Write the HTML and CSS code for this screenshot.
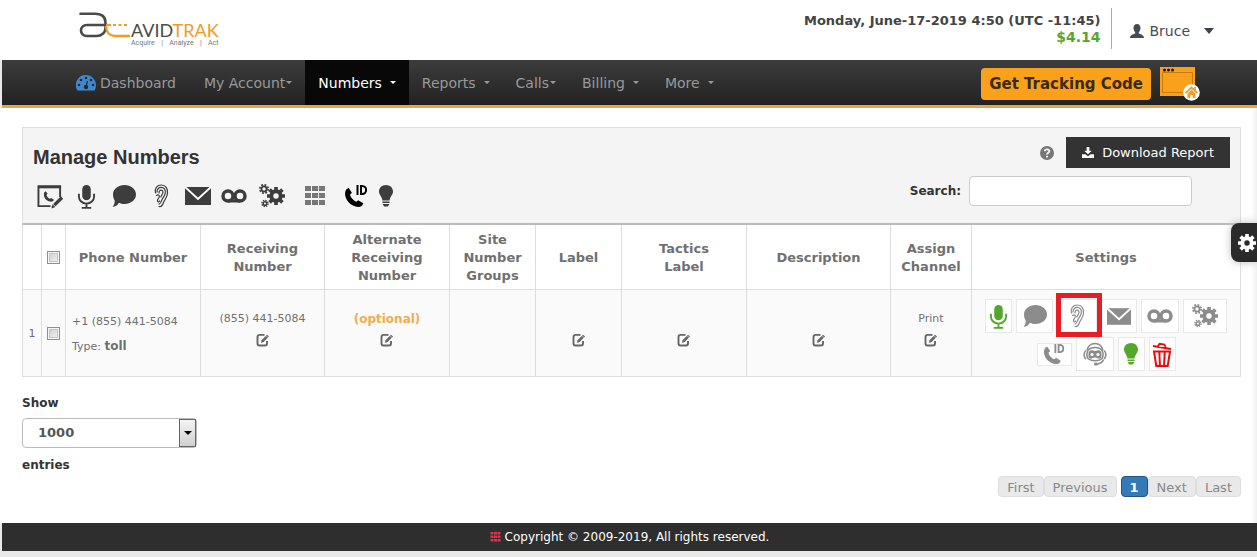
FILE: index.html
```html
<!DOCTYPE html>
<html lang="en">
<head>
<meta charset="utf-8">
<title>AvidTrak - Manage Numbers</title>
<link rel="stylesheet" href="styles.css">
</head>
<body>
<svg class="sprite" aria-hidden="true">
  <symbol id="i-mic" viewBox="0 0 20 26"><rect x="5.500" y="1" width="9" height="16" rx="4.500" fill="currentColor"/><path d="M2 10v3a8 7.500 0 0 0 16 0v-3M10 20.500V25M5 25h10" fill="none" stroke="currentColor" stroke-width="2"/></symbol>
  <symbol id="i-chat" viewBox="0 0 24 22"><path d="M12.500 0C19 0 24 4.300 24 9.500S19 19 12.500 19c-2 0-4-.4-5.600-1.200C5.500 20.500 3.500 21.500.5 21.800c1.600-1.600 2.300-3.300 2.200-6.200C1.600 13.800 1 11.700 1 9.500 1 4.300 6 0 12.500 0z" fill="currentColor"/></symbol>
  <symbol id="i-ear" viewBox="0 0 16 24"><path d="M2.500 9C1.500 4 4 1 8.500 1s6.500 4 6 8.500c-.4 4-2.500 5.500-4 9C9.500 21.500 8 23 6 22.500M4 8c0-3 2-4.800 4.500-4.600 3.200.3 4.300 3 3.700 6-.6 3-2.700 4.300-3.700 7.300-.6 2-1.500 3.300-2.500 3.500M6 9c0-2 .9-3 2.200-2.900 1.800.2 2.200 2 1.300 3.700C8.500 11.500 8.200 12 7.800 13M3.500 11.500c1.600-1.200 3-.4 2.800 1.200S4.500 14.700 4.500 16.500s1.300 1.800 2.100.5" fill="none" stroke="currentColor" stroke-width="1.200" stroke-linecap="round"/></symbol>
  <symbol id="i-mail" viewBox="0 0 26 18"><path d="M0 0h26v18H0z" fill="currentColor"/><path d="M0 0l13 12L26 0" fill="none" stroke="#fff" stroke-width="2"/></symbol>
  <symbol id="i-voicemail" viewBox="0 0 26 14"><path d="M7 12h12" stroke="currentColor" stroke-width="3"/><circle cx="7" cy="7" r="5" fill="none" stroke="currentColor" stroke-width="3.500"/><circle cx="19" cy="7" r="5" fill="none" stroke="currentColor" stroke-width="3.500"/></symbol>
  <symbol id="i-gear" viewBox="0 0 20 20"><circle cx="10" cy="10" r="5.200" fill="none" stroke="currentColor" stroke-width="4.400"/><path d="M10 0v4M10 16v4M0 10h4M16 10h4M2.900 2.900l3 3M14.100 14.100l3 3M2.900 17.100l3-3M14.100 5.900l3-3" stroke="currentColor" stroke-width="4"/></symbol>
  <symbol id="i-gears" viewBox="0 0 26 24"><use href="#i-gear" x="8" y="3" width="18" height="18"/><g fill="none" stroke="currentColor"><circle cx="5" cy="5" r="2.600" stroke-width="1.800"/><circle cx="5" cy="5" r="4.200" stroke-width="1.700" stroke-dasharray="1.800 1.500"/><circle cx="6" cy="19.500" r="1.800" stroke-width="1.500"/><circle cx="6" cy="19.500" r="3.100" stroke-width="1.300" stroke-dasharray="1.400 1.030"/></g></symbol>
  <symbol id="i-grid" viewBox="0 0 20 20"><path d="M0 0h6v5H0zM7 0h6v5H7zM14 0h6v5h-6zM0 7h6v5H0zM7 7h6v5H7zM14 7h6v5h-6zM0 14h6v5H0zM7 14h6v5H7zM14 14h6v5h-6z" fill="currentColor"/></symbol>
  <symbol id="i-phone" viewBox="0 0 18 18"><path d="M3.500 0L6.500 4.500 4.700 6.500c.9 2.800 3 5.200 6 6.500L12.500 11.500l4.800 3c-.6 2.200-2 3.500-4.800 3.500C5.500 17.500 0 11.500 0 5 .2 2.500 1.300.5 3.500 0z" fill="currentColor"/></symbol>
  <symbol id="i-callid" viewBox="0 0 24 24"><use href="#i-phone" x="1" y="4" width="19" height="19"/><path d="M13.500 1v10M17 2h1c5.500 0 5.500 8 0 8h-1z" fill="none" stroke="currentColor" stroke-width="2"/></symbol>
  <symbol id="i-bulb" viewBox="0 0 14 22"><path d="M7 0c4 0 7 2.800 7 6.500 0 3.500-3 5-3.400 9H3.400C3 11.500 0 10 0 6.500 0 2.800 3 0 7 0zM3.500 16.500h7v1.500h-7zM3.500 19h7l-1.700 2.500H5.200z" fill="currentColor"/></symbol>
  <symbol id="i-form" viewBox="0 0 27 25"><path d="M24 13V2H1.500v20.500H14" fill="none" stroke="currentColor" stroke-width="2"/><path d="M1 1h24v3H1z" fill="currentColor"/><use href="#i-phone" x="7" y="7" width="11" height="11"/><path d="M18 21.500l8-8" stroke="currentColor" stroke-width="3.500"/><path d="M16 20.500l3 3L15 25z" fill="currentColor"/></symbol>
  <symbol id="i-bot" viewBox="0 0 24 24"><path d="M4 8.500C5 4 8 1.500 12 1.500S19 4 20 8.500M3 8.500c-2.500 2-2.500 6.500 0 8.500M21 8.500c2.500 2 2.500 6.500 0 8.500M20.500 17.500c-1 3-3.500 4.300-6.500 4.500" fill="none" stroke="currentColor" stroke-width="1.600"/><path d="M5 8.500c3-4 11-4 14 0 1.500 3 1.500 5.500 0 8-3 3-11 3-14 0-1.500-2.500-1.500-5 0-8z" fill="none" stroke="currentColor" stroke-width="1.500"/><path d="M6.500 9c1.500-1.500 3.500 0 5.500 0s4-1.500 5.500 0 1.500 6 0 7.300S14 15.500 12 15.500s-4 2-5.500.8-1.500-5.800 0-7.300z" fill="currentColor"/><circle cx="9" cy="12.500" r="1.600" fill="#fff"/><circle cx="15" cy="12.500" r="1.600" fill="#fff"/><rect x="11" y="20.500" width="4" height="3" rx="1.500" fill="currentColor"/></symbol>
  <symbol id="i-trash" viewBox="0 0 20 25"><path d="M1 4l18 3M6 4.500L7.500 1.800 12.500 2.500 13.500 5.500" fill="none" stroke="currentColor" stroke-width="1.800"/><path d="M2 9.500h16l-2.300 14.500H4.300zM7.300 10l.6 13M12.700 10l-.6 13" fill="none" stroke="currentColor" stroke-width="2"/></symbol>
  <symbol id="i-edit" viewBox="0 0 14 14"><path d="M8.500 1.900H3.500A2 2 0 0 0 1.500 4v6.500a2 2 0 0 0 2 2H9a2 2 0 0 0 2-2V8" fill="none" stroke="currentColor" stroke-width="1.900"/><path d="M5 10l.5-2.800L11 1.700 13 3.500 7.600 9z" fill="currentColor"/><path d="M10 2.600L12 4.600" stroke="#fafafa" stroke-width=".7"/></symbol>
  <symbol id="i-user" viewBox="0 0 14 14"><path d="M7 0c2.300 0 3.600 1.700 3.500 4-.1 2-.8 3.400-1.700 4.300v1.300c2.500.9 5 1.500 5.200 4.400H0c.2-2.900 2.700-3.500 5.200-4.400V8.300C4.300 7.400 3.600 6 3.500 4 3.400 1.700 4.700 0 7 0z" fill="currentColor"/></symbol>
  <symbol id="i-download" viewBox="0 0 13 12"><path d="M5 0h3v4h2.500L6.500 8 2.500 4H5zM0 8h3.500l3 2 3-2H13v4H0z" fill="currentColor"/></symbol>
  <symbol id="i-help" viewBox="0 0 14 14"><circle cx="7" cy="7" r="7" fill="currentColor"/><path d="M4.700 5.300C4.700 2.700 9.300 2.700 9.300 5.300 9.300 6.800 7 6.800 7 8.600M7 9.700v1.900" fill="none" stroke="#f3f3f3" stroke-width="1.900"/></symbol>
  <symbol id="i-gauge" viewBox="0 0 20 16"><path d="M10 0c5.500 0 10 4.500 10 10 0 2-.6 4-1.500 5.500h-17A10 10 0 0 1 10 0z" fill="currentColor"/><g fill="#2b2b2b"><circle cx="10" cy="3" r="1.300"/><circle cx="5" cy="5" r="1.300"/><circle cx="15" cy="5" r="1.300"/><circle cx="3" cy="10" r="1.300"/><circle cx="17" cy="10" r="1.300"/><circle cx="10" cy="12" r="2.200"/></g><path d="M10 12l1.500-6" stroke="#2b2b2b" stroke-width="1.300"/></symbol>
</svg>

<header class="topbar">
  <a class="logo" href="#" aria-label="AvidTrak">
    <svg class="logo-mark" width="52" height="28" viewBox="0 0 52 28" aria-hidden="true"><path d="M1.500 1.800H16c7 0 10.500 3.500 10.500 9v5c0 5-4 8.200-9 8.200H8c-8 0-8-11 0-11h18" fill="none" stroke="#4a4a4a" stroke-width="2.600" stroke-linecap="round"/><path d="M27 13h5" stroke="#f39a27" stroke-width="2.200"/><path d="M34 13h14" stroke="#f39a27" stroke-width="2.200" stroke-dasharray="3 2.500"/><path d="M27 14c.5 7 3 10 9 10h15" fill="none" stroke="#f39a27" stroke-width="2.400"/></svg>
    <span class="logo-words">
      <span class="logo-name">AVID<b class="logo-accent">TRAK</b></span>
      <span class="logo-tag"><span>Acquire</span><span>|</span><span>Analyze</span><span>|</span><span>Act</span></span>
    </span>
  </a>
  <div class="account">
    <div class="clock">
      <div>Monday, June-17-2019 4:50 (UTC -11:45)</div>
      <div class="balance">$4.14</div>
    </div>
    <button class="user" type="button"><svg width="14" height="14"><use href="#i-user"/></svg>Bruce<span class="user-caret"></span></button>
  </div>
</header>

<nav class="nav">
  <div class="nav-links">
    <a class="home" href="#"><svg class="gauge" width="20" height="16"><use href="#i-gauge"/></svg>Dashboard</a>
    <a href="#">My Account<span class="caret"></span></a>
    <a class="active" href="#">Numbers <span class="caret spaced"></span></a>
    <a href="#">Reports <span class="caret spaced"></span></a>
    <a href="#">Calls<span class="caret"></span></a>
    <a href="#">Billing <span class="caret spaced"></span></a>
    <a href="#">More <span class="caret spaced"></span></a>
  </div>
  <div class="nav-actions">
    <button class="tracking" type="button">Get Tracking Code</button>
    <a href="#" aria-label="Home page"><svg class="site" width="40" height="34" viewBox="0 0 40 34"><path d="M0 0h35v29H0z" fill="#f9a11b"/><path d="M2.500 5.500h30v20h-30z" fill="none" stroke="#c67c10"/><g fill="#111"><circle cx="4.500" cy="3" r="1.500"/><circle cx="8.500" cy="3" r="1.500"/><circle cx="12.500" cy="3" r="1.500"/></g><circle cx="31.500" cy="25.500" r="8.300" fill="#fff"/><path d="M25.500 26l6-5.500 6 5.500M35 20v3" fill="none" stroke="#f39a27" stroke-width="1.700"/><path d="M27.500 26.500l4-3.700 4 3.700v4.500h-2.700v-3h-2.600v3h-2.700z" fill="#f39a27"/></svg></a>
  </div>
</nav>

<main class="content">
  <section class="panel">
    <div class="panel-left">
      <h1>Manage Numbers</h1>
      <div class="toolbar">
        <button type="button" class="w27" aria-label="Edit number"><svg width="26" height="25"><use href="#i-form"/></svg></button>
        <button type="button" class="w26" aria-label="Record"><svg width="19" height="25"><use href="#i-mic"/></svg></button>
        <button type="button" class="w29" aria-label="Message"><svg width="24" height="22"><use href="#i-chat"/></svg></button>
        <button type="button" class="w26" aria-label="Whisper"><svg width="16" height="24"><use href="#i-ear"/></svg></button>
        <button type="button" class="w28" aria-label="Email"><svg width="26" height="18"><use href="#i-mail"/></svg></button>
        <button type="button" class="w24" aria-label="Voicemail"><svg width="26" height="14"><use href="#i-voicemail"/></svg></button>
        <button type="button" class="w31" aria-label="Configure"><svg width="26" height="24"><use href="#i-gears"/></svg></button>
        <button type="button" class="w36 muted" aria-label="Keypad"><svg width="20" height="20"><use href="#i-grid"/></svg></button>
        <button type="button" class="w26 black" aria-label="Caller ID"><svg width="24" height="24"><use href="#i-callid"/></svg></button>
        <button type="button" class="w14" aria-label="Tips"><svg width="14" height="22"><use href="#i-bulb"/></svg></button>
      </div>
    </div>
    <div class="panel-right">
      <div class="report">
        <svg class="help" width="14" height="14"><use href="#i-help"/></svg>
        <button class="download" type="button"><svg width="12" height="11"><use href="#i-download"/></svg>Download Report</button>
      </div>
      <div class="search">
        <label for="search">Search:</label>
        <input id="search" type="text">
      </div>
    </div>
  </section>

  <table class="numbers">
    <colgroup><col class="c-index"><col class="c-check"><col class="c-phone"><col class="c-recv"><col class="c-alt"><col class="c-site"><col class="c-site"><col class="c-tactics"><col class="c-desc"><col class="c-channel"><col class="c-settings"></colgroup>
    <thead>
      <tr>
        <th></th>
        <th><input type="checkbox" aria-label="Select all"></th>
        <th>Phone Number</th>
        <th>Receiving Number</th>
        <th>Alternate Receiving Number</th>
        <th>Site Number Groups</th>
        <th>Label</th>
        <th>Tactics<br>Label</th>
        <th>Description</th>
        <th>Assign Channel</th>
        <th>Settings</th>
      </tr>
    </thead>
    <tbody>
      <tr>
        <td>1</td>
        <td><input type="checkbox" aria-label="Select number"></td>
        <td class="phone"><div>+1 (855) 441-5084</div><div>Type: <b>toll</b></div></td>
        <td><div class="value">(855) 441-5084</div><button type="button" class="edit" aria-label="Edit"><svg width="14" height="14"><use href="#i-edit"/></svg></button></td>
        <td><div class="value optional">(optional)</div><button type="button" class="edit" aria-label="Edit"><svg width="14" height="14"><use href="#i-edit"/></svg></button></td>
        <td></td>
        <td><div class="value"></div><button type="button" class="edit" aria-label="Edit"><svg width="14" height="14"><use href="#i-edit"/></svg></button></td>
        <td><div class="value"></div><button type="button" class="edit" aria-label="Edit"><svg width="14" height="14"><use href="#i-edit"/></svg></button></td>
        <td><div class="value"></div><button type="button" class="edit" aria-label="Edit"><svg width="14" height="14"><use href="#i-edit"/></svg></button></td>
        <td><div class="value">Print</div><button type="button" class="edit" aria-label="Edit"><svg width="14" height="14"><use href="#i-edit"/></svg></button></td>
        <td class="settings">
          <div class="tiles">
            <button type="button" class="w27 green" aria-label="Record"><svg width="19" height="25"><use href="#i-mic"/></svg></button>
            <button type="button" class="w37" aria-label="Message"><svg width="24" height="22"><use href="#i-chat"/></svg></button>
            <button type="button" class="w40 marked" aria-label="Whisper"><svg width="16" height="24"><use href="#i-ear"/></svg></button>
            <button type="button" class="w36" aria-label="Email"><svg width="24" height="17"><use href="#i-mail"/></svg></button>
            <button type="button" class="w38" aria-label="Voicemail"><svg width="26" height="14"><use href="#i-voicemail"/></svg></button>
            <button type="button" class="w44" aria-label="Configure"><svg width="26" height="24"><use href="#i-gears"/></svg></button>
          </div>
          <div class="tiles">
            <button type="button" class="w35 short" aria-label="Caller ID"><svg width="22" height="22"><use href="#i-callid"/></svg></button>
            <button type="button" class="w38" aria-label="Assistant"><svg width="24" height="24"><use href="#i-bot"/></svg></button>
            <button type="button" class="w27 green" aria-label="Tips"><svg width="14" height="22"><use href="#i-bulb"/></svg></button>
            <button type="button" class="w27 red" aria-label="Delete"><svg width="20" height="25"><use href="#i-trash"/></svg></button>
          </div>
        </td>
      </tr>
    </tbody>
  </table>

  <div class="length">
    <label for="length">Show</label>
    <div class="select">
      <select id="length"><option>1000</option></select>
      <span class="select-arrow"></span>
    </div>
    <div>entries</div>
  </div>

  <div class="pager">
    <button type="button">First</button><button type="button">Previous</button><button type="button" class="current">1</button><button type="button">Next</button><button type="button">Last</button>
  </div>
</main>

<footer class="footer"><svg width="11" height="10"><use href="#i-grid"/></svg>Copyright © 2009-2019, All rights reserved.</footer>

<button class="drawer" type="button" aria-label="Page settings"><svg width="18" height="18"><use href="#i-gear"/></svg></button>
</body>
</html>
```

FILE: styles.css
```css
* { box-sizing: border-box; }
html { background: #e9e9e7; }
body {
  margin: 0;
  padding-left: 2px;
  background: #e9e9e7;
  color: #333;
  font-family: Verdana, "DejaVu Sans", sans-serif;
  font-size: 12px;
  line-height: 18px;
}
.sprite { display: none; }
button {
  font: inherit;
  color: inherit;
  margin: 0;
  padding: 0;
  border: 0;
  background: none;
}
svg { display: block; flex: none; }
a { color: inherit; text-decoration: none; }

/* Top bar */
.topbar {
  display: flex;
  justify-content: space-between;
  align-items: flex-start;
  height: 60px;
  margin-left: -2px;
  padding: 8px 43px 0 79px;
  background: #fff;
}
.logo { display: flex; padding-top: 4px; }
.logo-words {
  display: flex;
  flex-direction: column;
  padding-top: 9px;
  color: #4a4a4a;
}
.logo-name {
  font-family: Lato, sans-serif;
  font-size: 18px;
  line-height: 19px;
}
.logo-accent { color: #f39a27; font-weight: 400; }
.logo-tag {
  display: flex;
  justify-content: space-between;
  color: #777;
  font-family: Roboto, sans-serif;
  font-size: 7px;
  line-height: 7px;
}
.account { display: flex; height: 41px; }
.clock {
  padding: 4px 11px 0 0;
  border-right: 1px solid #aaa;
  color: #444;
  font-size: 13px;
  font-weight: 700;
  line-height: 17px;
  text-align: right;
}
.balance { color: #55a630; font-size: 14px; }
.user {
  display: flex;
  align-items: center;
  gap: 5px;
  padding: 4px 0 0 18px;
  color: #444c52;
  font-size: 14px;
}
.user-caret {
  margin-left: 9px;
  border: 5px solid transparent;
  border-top: 6px solid #3c444a;
  border-bottom: 0;
}

/* Navigation */
.nav {
  display: flex;
  justify-content: space-between;
  height: 48px;
  padding: 0 57px 0 61px;
  border-bottom: 3px solid #e5a64a;
  background: linear-gradient(#3c3c3c, #222);
  color: #999;
  font-size: 14px;
}
.nav-links { display: flex; }
.nav-links a {
  display: flex;
  align-items: center;
  padding: 0 13px;
  white-space: nowrap;
}
.nav-links .home { padding-right: 15px; }
.nav-links .active { background: #080808; color: #fff; }
.gauge { margin-right: 4px; color: #3f87d0; }
.caret {
  margin-left: 1px;
  border: 3px solid transparent;
  border-top: 3px solid;
  border-bottom: 0;
}
.caret.spaced { margin-left: 8px; }
.nav-actions { display: flex; align-items: center; gap: 9px; padding-top: 2px; }
.tracking {
  height: 32px;
  padding: 0 8px;
  border-radius: 4px;
  background: #f9a11b;
  color: #3c2a10;
  font-size: 15px;
  font-weight: 700;
}

/* Page body */
.content {
  margin-left: -2px;
  padding: 19px 16px 26px 22px;
  background: linear-gradient(to left, #f0f0f0, #fff 6px);
}
.panel {
  display: flex;
  justify-content: space-between;
  height: 98px;
  padding: 9px 10px 0;
  border: 1px solid #ddd;
  border-bottom: 2px solid #bbb;
  background: #f4f4f4;
}
h1 {
  margin: 0;
  color: #333;
  font: 700 20px/40px "Liberation Sans", Arial, sans-serif;
}
.toolbar {
  display: flex;
  gap: 10px;
  height: 28px;
  margin: 5px 0 0 3px;
  color: #3d3d3d;
}
.toolbar button { display: flex; align-items: center; justify-content: center; }
.toolbar .muted { color: #777; }
.toolbar .black { color: #000; }
.w14 { width: 14px; }
.w24 { width: 24px; }
.w26 { width: 26px; }
.w27 { width: 27px; }
.w28 { width: 28px; }
.w29 { width: 29px; }
.w31 { width: 31px; }
.w35 { width: 35px; }
.w36 { width: 36px; }
.w37 { width: 37px; }
.w38 { width: 38px; }
.w40 { width: 40px; }
.w44 { width: 44px; }
.report { display: flex; align-items: center; justify-content: flex-end; gap: 12px; }
.help { color: #777; }
.download {
  display: flex;
  align-items: center;
  gap: 8px;
  height: 31px;
  padding: 0 16px;
  background: #333;
  color: #fff;
  font-size: 13px;
}
.search {
  display: flex;
  align-items: center;
  gap: 8px;
  margin: 8px 38px 0 0;
  font-weight: 700;
}
.search input {
  width: 223px;
  height: 30px;
  padding: 4px 8px;
  border: 1px solid #ccc;
  border-radius: 4px;
  background: #fff;
}

/* Numbers table */
.numbers {
  width: 100%;
  table-layout: fixed;
  border-collapse: collapse;
  color: #707070;
  text-align: center;
}
.c-index { width: 19px; }
.c-check { width: 24px; }
.c-phone { width: 135px; }
.c-recv { width: 124px; }
.c-alt { width: 125px; }
.c-site { width: 86px; }
.c-tactics { width: 125px; }
.c-desc { width: 144px; }
.c-channel { width: 81px; }
.c-settings { width: 269px; }
.numbers th,
.numbers td {
  padding: 2px 6px 0;
  border: 1px solid #ddd;
}
.numbers th {
  height: 64px;
  border-top: 0;
  background: #fff;
  font-size: 13px;
}
.numbers td {
  height: 87px;
  background: #fafafa;
  font-size: 11px;
}
.numbers th:nth-child(-n+2),
.numbers td:nth-child(-n+2) { padding: 2px 0 0; }
.numbers input {
  appearance: none;
  display: block;
  width: 13px;
  height: 13px;
  margin: 0 auto;
  border: 1px solid #8e8f8f;
  background: linear-gradient(135deg, #c8ccd0, #f6f6f6);
  box-shadow: inset 0 0 0 1px #f4f4f4, inset 0 0 0 2px #c4c8cc;
}
.numbers .phone { text-align: left; line-height: 25px; }
.phone b { font-size: 12px; }
.value { height: 18px; }
.optional { color: #f0ad4e; font-size: 12px; font-weight: 700; }
.edit { display: block; margin: 5px auto 10px; color: #666; }
.numbers .settings { padding: 5px 0 0; }
.tiles {
  display: flex;
  align-items: center;
  justify-content: center;
  gap: 4px;
  color: #8c8c8c;
}
.tiles + .tiles { margin-top: 4px; }
.tiles button {
  position: relative;
  display: flex;
  align-items: center;
  justify-content: center;
  height: 34px;
  border: 1px solid #e8e8e8;
  background: #fff;
}
.tiles .short { height: 23px; }
.tiles .green { color: #52a829; }
.tiles .red { color: #ee0a0a; }
.marked::after {
  content: "";
  position: absolute;
  inset: -7px -6px -5px -2px;
  z-index: 1;
  border: 5px solid #e81c24;
}

/* Length menu and pager */
.length { padding-top: 17px; font-weight: 700; }
.length label { display: block; }
.select {
  position: relative;
  width: 175px;
  margin: 6px 0 8px;
}
.select select {
  appearance: none;
  display: block;
  width: 100%;
  height: 30px;
  padding: 0 15px;
  border: 1px solid #bbb;
  border-radius: 4px;
  background: #fff;
  color: #555;
  font: inherit;
  font-size: 13px;
}
.select-arrow {
  position: absolute;
  top: 1px;
  right: 1px;
  bottom: 1px;
  display: grid;
  place-items: center;
  width: 17px;
  border: 1px solid #666;
  background: linear-gradient(#f4f4f4, #d0d0d0);
  pointer-events: none;
}
.select-arrow::before {
  content: "";
  border: 4px solid transparent;
  border-top-color: #000;
  border-bottom: 0;
}
.pager {
  display: flex;
  justify-content: flex-end;
  margin-top: 2px;
  color: #888;
  font-size: 13px;
}
.pager button {
  height: 21px;
  padding: 2px 8px 0;
  border: 1px solid #ddd;
  border-radius: 4px;
  background: #e9e9e9;
}
.pager .current {
  margin-left: 4px;
  border-color: #245682;
  background: #337ab7;
  color: #fff;
  font-weight: 700;
}

.footer {
  display: flex;
  align-items: center;
  justify-content: center;
  gap: 4px;
  height: 28px;
  background: #2e2e2e;
  color: #fff;
}
.footer svg { color: #d9344a; }

/* Drawer tab over the page edge */
.drawer {
  position: fixed;
  top: 223px;
  right: 0;
  display: flex;
  align-items: center;
  width: 26px;
  height: 39px;
  padding-left: 7px;
  border-radius: 8px 0 0 8px;
  background: #2a2a2a;
  box-shadow: 0 0 8px #bbb;
  color: #fff;
}
```
